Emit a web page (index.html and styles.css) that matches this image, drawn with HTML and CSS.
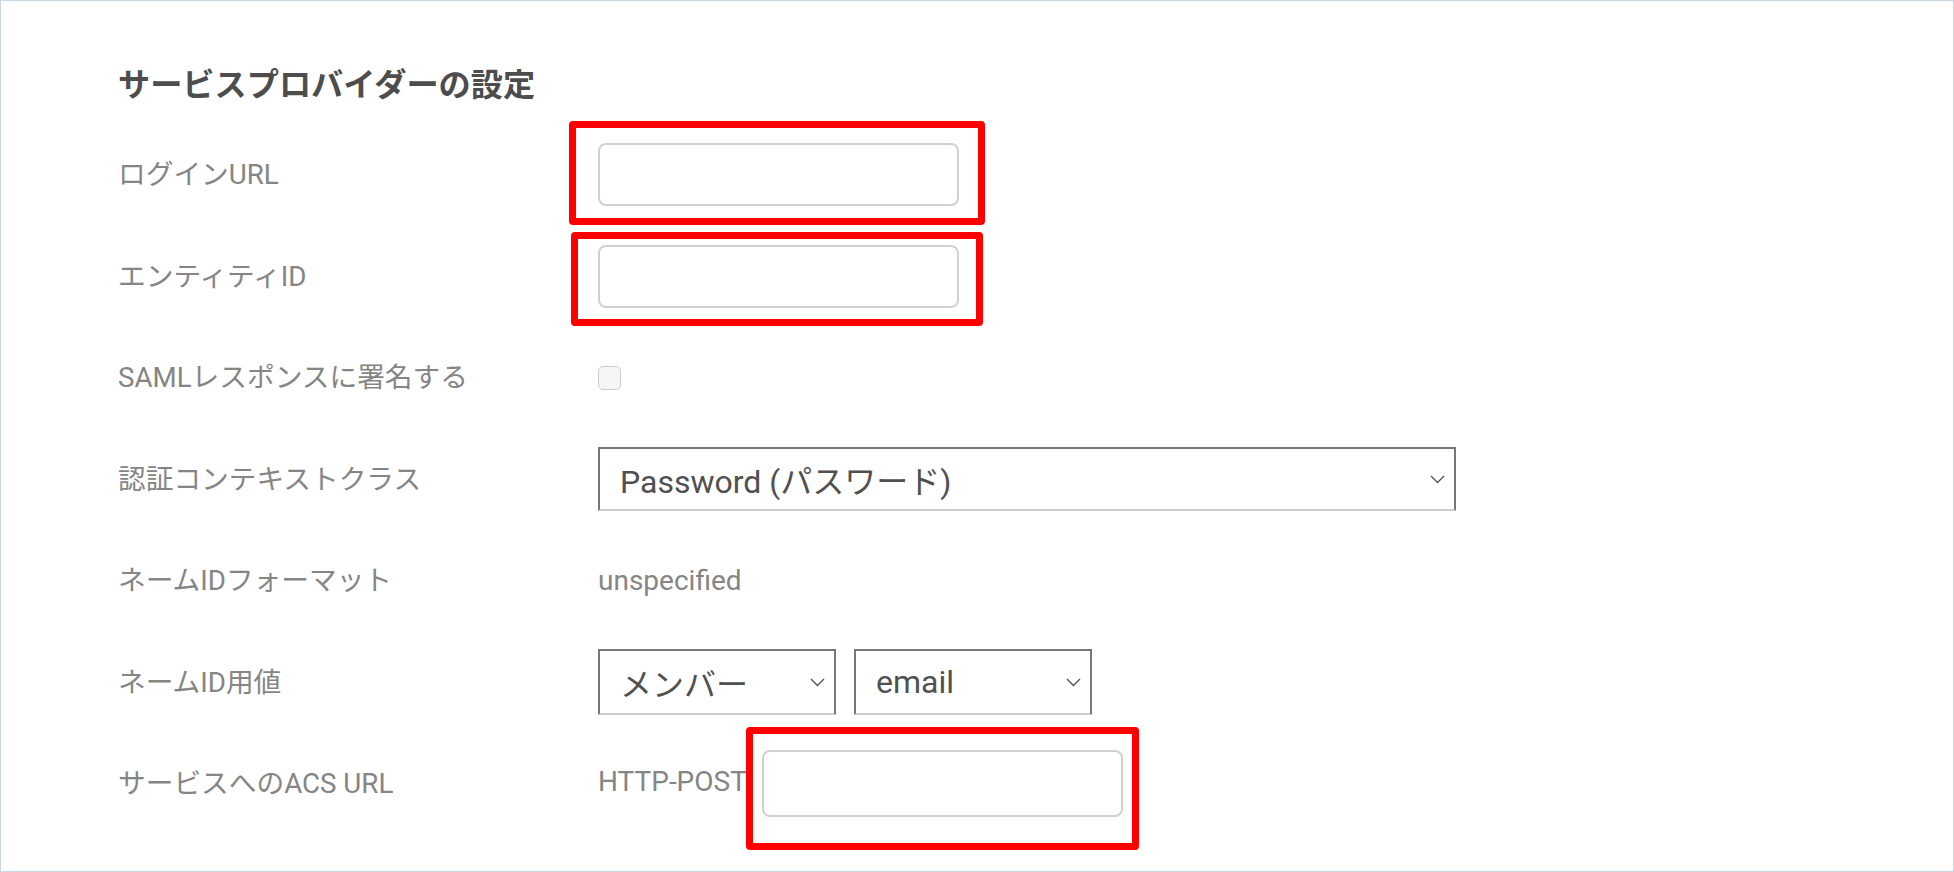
FILE: index.html
```html
<!DOCTYPE html>
<html lang="ja">
<head>
<meta charset="utf-8">
<title>サービスプロバイダーの設定</title>
<link rel="stylesheet" href="styles.css">
</head>
<body>
<div class="panel">
  <h2 class="title">サービスプロバイダーの設定</h2>
  <div class="form">
    <div class="row">
      <div class="label">ログインURL</div>
      <div class="control">
        <span class="field">
          <input class="text-input" type="text">
          <span class="mark mark-1"></span>
        </span>
      </div>
    </div>
    <div class="row">
      <div class="label">エンティティID</div>
      <div class="control">
        <span class="field">
          <input class="text-input" type="text">
          <span class="mark mark-2"></span>
        </span>
      </div>
    </div>
    <div class="row">
      <div class="label">SAMLレスポンスに署名する</div>
      <div class="control">
        <span class="checkbox"></span>
      </div>
    </div>
    <div class="row">
      <div class="label">認証コンテキストクラス</div>
      <div class="control">
        <div class="select select-wide">
          <span>Password (パスワード)</span>
          <svg class="chev" width="15" height="9" viewBox="0 0 15 9"><polyline points="1,1 7.5,7.5 14,1" fill="none" stroke="#555" stroke-width="1.4"/></svg>
        </div>
      </div>
    </div>
    <div class="row">
      <div class="label">ネームIDフォーマット</div>
      <div class="control">
        <span class="value">unspecified</span>
      </div>
    </div>
    <div class="row">
      <div class="label">ネームID用値</div>
      <div class="control pair">
        <div class="select select-small">
          <span>メンバー</span>
          <svg class="chev" width="15" height="9" viewBox="0 0 15 9"><polyline points="1,1 7.5,7.5 14,1" fill="none" stroke="#555" stroke-width="1.4"/></svg>
        </div>
        <div class="select select-small">
          <span>email</span>
          <svg class="chev" width="15" height="9" viewBox="0 0 15 9"><polyline points="1,1 7.5,7.5 14,1" fill="none" stroke="#555" stroke-width="1.4"/></svg>
        </div>
      </div>
    </div>
    <div class="row">
      <div class="label">サービスへのACS URL</div>
      <div class="control acs">
        <span class="value value-shift">HTTP-POST</span>
        <span class="field">
          <input class="text-input text-input-acs" type="text">
          <span class="mark mark-3"></span>
        </span>
      </div>
    </div>
  </div>
</div>
</body>
</html>
```
FILE: styles.css
```css
html, body {
  margin: 0;
  padding: 0;
  background: #ffffff;
}
body {
  font-family: Roboto, "Noto Sans CJK JP", sans-serif;
}
.panel {
  box-sizing: border-box;
  width: 1954px;
  height: 872px;
  border: 1px solid #c9d6e6;
  padding: 64px 0 0 117px;
  overflow: hidden;
}
.title {
  margin: 0;
  font-size: 32.2px;
  line-height: 40px;
  font-weight: 700;
  color: #4d4d4d;
  height: 59px;
}
.form {
  display: flex;
  flex-direction: column;
}
.row {
  display: grid;
  grid-template-columns: 480px 1fr;
  align-items: center;
  height: 101.5px;
}
.label {
  font-size: 27.7px;
  color: #858585;
  white-space: nowrap;
  padding-bottom: 5px;
}
.control {
  display: flex;
  align-items: center;
}
.field {
  position: relative;
  display: inline-block;
  line-height: 0;
}
.text-input {
  box-sizing: border-box;
  width: 361px;
  height: 63px;
  border: 2px solid #d0d0d0;
  border-radius: 8px;
  background: #fff;
  margin: 0;
  padding: 0 12px;
  outline: none;
}
.text-input-acs {
  height: 67px;
}
.mark {
  position: absolute;
  box-sizing: border-box;
  border: 7px solid #ff0000;
  border-radius: 4px;
  pointer-events: none;
}
.mark-1 {
  left: -29px;
  top: -22px;
  width: 416px;
  height: 104px;
}
.mark-2 {
  left: -27px;
  top: -13px;
  width: 412px;
  height: 94px;
}
.mark-3 {
  left: -16px;
  top: -23px;
  width: 393px;
  height: 123px;
}
.checkbox {
  box-sizing: border-box;
  width: 23px;
  height: 24px;
  border: 1.5px solid #cccccc;
  border-radius: 5px;
  background: #f6f6f6;
}
.select {
  box-sizing: border-box;
  display: flex;
  align-items: center;
  justify-content: space-between;
  border: 2px solid #777777;
  border-bottom-color: #cccccc;
  background: #fff;
  font-size: 32px;
  color: #505050;
  padding: 0 9px 0 20px;
}
.select-wide {
  width: 858px;
  height: 64px;
}
.select-small {
  width: 238px;
  height: 66px;
}
.pair {
  gap: 18px;
}
.chev {
  display: block;
  flex: none;
}
.value {
  font-size: 28px;
  color: #858585;
}
.value-shift {
  padding-bottom: 4px;
}
.acs {
  gap: 15px;
}
```
